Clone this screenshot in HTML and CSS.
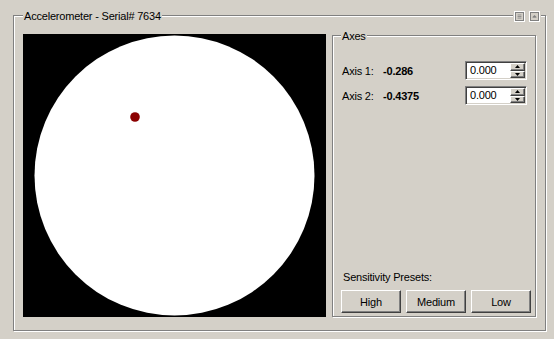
FILE: index.html
```html
<!DOCTYPE html>
<html lang="en">
<head>
    <meta charset="UTF-8">
    <title>Accelerometer</title>
    <link rel="stylesheet" href="styles.css">
</head>
<body>
    <div class="panel">
        <div class="panel-head">
            <span class="panel-title">Accelerometer - Serial# 7634</span>
            <span class="head-tools">
                <span class="tool-btn">
                    <svg width="9" height="9" viewBox="0 0 9 9">
                        <rect x="2" y="2" width="5" height="1" fill="#808080"/>
                        <rect x="2" y="4" width="5" height="1" fill="#808080"/>
                        <rect x="2" y="6" width="5" height="1" fill="#808080"/>
                    </svg>
                </span>
                <span class="tool-btn">
                    <svg width="9" height="9" viewBox="0 0 9 9">
                        <polygon points="4.5,2.5 7,5 2,5" fill="#808080"/>
                        <rect x="2" y="5" width="5" height="1" fill="#808080"/>
                    </svg>
                </span>
            </span>
        </div>

        <div class="panel-body">
            <svg class="pad" width="303" height="283" viewBox="0 0 303 283">
                <rect width="303" height="283" fill="#000"/>
                <circle cx="151.5" cy="141.5" r="140" fill="#fff"/>
                <circle cx="112" cy="83" r="4.8" fill="#8b0000"/>
            </svg>

            <div class="axes-group">
                <div class="group-title">Axes</div>

                <div class="axis-rows">
                    <div class="axis-row">
                        <span class="axis-label">Axis 1:</span>
                        <span class="axis-value">-0.286</span>
                        <span class="spin">
                            <span class="spin-text">0.000</span>
                            <span class="spin-btns">
                                <span class="spin-btn"><svg width="5" height="3"><polygon points="2.5,0 5,3 0,3" fill="#000"/></svg></span>
                                <span class="spin-btn"><svg width="5" height="3"><polygon points="0,0 5,0 2.5,3" fill="#000"/></svg></span>
                            </span>
                        </span>
                    </div>
                    <div class="axis-row">
                        <span class="axis-label">Axis 2:</span>
                        <span class="axis-value">-0.4375</span>
                        <span class="spin">
                            <span class="spin-text">0.000</span>
                            <span class="spin-btns">
                                <span class="spin-btn"><svg width="5" height="3"><polygon points="2.5,0 5,3 0,3" fill="#000"/></svg></span>
                                <span class="spin-btn"><svg width="5" height="3"><polygon points="0,0 5,0 2.5,3" fill="#000"/></svg></span>
                            </span>
                        </span>
                    </div>
                </div>

                <div class="presets">
                    <div class="presets-label">Sensitivity Presets:</div>
                    <div class="preset-buttons">
                        <button class="btn">High</button>
                        <button class="btn">Medium</button>
                        <button class="btn">Low</button>
                    </div>
                </div>
            </div>
        </div>
    </div>
</body>
</html>
```

FILE: styles.css
```css
* {
    margin: 0;
    padding: 0;
    box-sizing: border-box;
}

body {
    font-family: 'Liberation Sans', Arial, sans-serif;
    font-size: 11px;
    letter-spacing: -0.2px;
    color: #000;
    background: #d4d0c8;
    padding: 15px 0 0 13px;
    height: 339px;
    overflow: hidden;
}

/* etched group frame */
.panel,
.axes-group {
    border: 1px solid #808080;
    box-shadow: 1px 1px 0 #fff, inset 1px 1px 0 #fff;
}

.panel {
    width: 533px;
    height: 316px;
    padding: 0 8px 0 9px;
}

.panel-head {
    display: flex;
    justify-content: space-between;
    align-items: center;
    height: 13px;
    margin: -6px -4px 0 0;
}

.panel-title,
.group-title {
    background: #d4d0c8;
    line-height: 13px;
    padding: 0 1px;
}

.head-tools {
    display: flex;
    gap: 4px;
    padding: 0 1px;
    background: #d4d0c8;
}

.tool-btn {
    width: 11px;
    height: 11px;
    border: 1px solid #fff;
    display: flex;
}

.tool-btn svg {
    border: 1px solid #808080;
    background: #d4d0c8;
}

.panel-body {
    display: flex;
    gap: 6px;
    align-items: flex-start;
    margin-top: 11px;
}

.pad {
    display: block;
    flex: none;
}

.axes-group {
    width: 204px;
    height: 282px;
    margin-top: 1px;
    display: flex;
    flex-direction: column;
}

.group-title {
    align-self: flex-start;
    margin: -6px 0 0 8px;
}

.axis-rows {
    display: flex;
    flex-direction: column;
    gap: 6px;
    margin-top: 18px;
    padding-left: 9px;
}

.axis-row {
    display: flex;
    align-items: center;
    height: 19px;
}

.axis-label {
    width: 41px;
}

.axis-value {
    width: 82px;
    font-weight: bold;
}

.spin {
    width: 62px;
    height: 19px;
    display: flex;
    background: #fff;
    border: 1px solid;
    border-color: #808080 #fff #fff #808080;
    box-shadow: inset 1px 1px 0 #404040, inset -1px -1px 0 #d4d0c8;
    padding: 1px;
}

.spin-text {
    flex: 1;
    padding-left: 3px;
    line-height: 15px;
}

.spin-btns {
    width: 15px;
    display: flex;
    flex-direction: column;
}

.spin-btn {
    flex: 1;
    display: flex;
    align-items: center;
    justify-content: center;
    background: #d4d0c8;
    border: 1px solid;
    border-color: #fff #404040 #404040 #fff;
    box-shadow: inset -1px -1px 0 #808080;
}

.spin-btn svg {
    display: block;
}

.presets {
    margin-top: auto;
    padding: 0 0 3px 8px;
}

.presets-label {
    line-height: 13px;
    padding-left: 2px;
    margin-bottom: 6px;
}

.preset-buttons {
    display: flex;
    gap: 5px;
}

.btn {
    width: 60px;
    height: 23px;
    font-family: inherit;
    font-size: 11px;
    letter-spacing: -0.2px;
    color: #000;
    background: #d4d0c8;
    border: 1px solid;
    border-color: #fff #404040 #404040 #fff;
    box-shadow: inset -1px -1px 0 #808080;
}
```
